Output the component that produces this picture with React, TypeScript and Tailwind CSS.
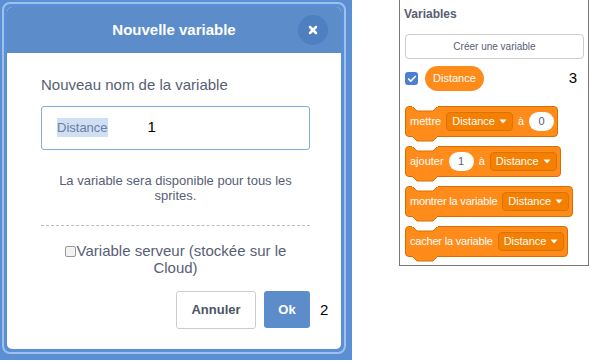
import { Check, X } from "lucide-react";

const font = { fontFamily: '"Liberation Sans", Arial, sans-serif' };

function Caret() {
  return (
    <svg width="8" height="5" viewBox="0 0 8 5" className="ml-[4px]">
      <path d="M0.5 0.5 L7.5 0.5 L4 4.5 Z" fill="white" />
    </svg>
  );
}

function Dropdown({ label }: { label: string }) {
  return (
    <span className="flex h-[19px] items-center rounded-[4px] border border-[#d97400] bg-[#f57f00] px-[5px] text-[11px] text-white">
      {label}
      <Caret />
    </span>
  );
}

function Oval({ value }: { value: string }) {
  return (
    <span className="flex h-[19px] w-[25px] items-center justify-center rounded-full bg-white text-[11px] text-[#575e75]">
      {value}
    </span>
  );
}

function Block({ children }: { children: React.ReactNode }) {
  return (
    <div className="relative flex h-[31px] w-fit items-center gap-[5px] rounded-[4px] border border-[#db6e00] bg-[#ff8c1a] pl-[4px] pr-[3px] text-[11px] text-white">
      {/* notch at top */}
      <svg
        width="26"
        height="6"
        viewBox="0 0 26 6"
        className="absolute left-[6px] top-[-1px]"
      >
        <path d="M0 0 L5 5 L21 5 L26 0 Z" fill="white" stroke="#db6e00" strokeWidth="1" />
        <path d="M0 0 L26 0" stroke="white" strokeWidth="2" />
      </svg>
      {/* tab at bottom */}
      <svg
        width="26"
        height="6"
        viewBox="0 0 26 6"
        className="absolute bottom-[-6px] left-[6px]"
      >
        <path d="M0 0 L5 5 L21 5 L26 0" fill="#ff8c1a" stroke="#db6e00" strokeWidth="1" />
        <path d="M1 0 L25 0" stroke="#ff8c1a" strokeWidth="2" />
      </svg>
      {children}
    </div>
  );
}

function Modal() {
  return (
    <div className="h-[360px] w-[352px] bg-[#5b8fd5] pb-[6px] pl-[2px] pr-[6px] pt-[2px]">
      <div className="h-full rounded-[8px] border-2 border-[#9ec0ea] p-[3px]">
        <div className="flex h-full flex-col overflow-hidden rounded-[5px] bg-white">
          <div className="relative flex h-[46px] shrink-0 items-center justify-center bg-[#5d8cca]">
            <span className="text-[15px] font-bold text-white">Nouvelle variable</span>
            <span className="absolute right-[13px] top-[8px] flex h-[30px] w-[30px] items-center justify-center rounded-full bg-[#4e7fc1]">
              <X size={12} strokeWidth={5} color="white" />
            </span>
          </div>

          <div className="flex flex-1 flex-col px-[34px] pt-[21px]">
            <div className="text-[15px] text-[#575e75]">Nouveau nom de la variable</div>
            <div className="mt-[9px] flex h-[44px] w-[269px] items-center rounded-[3px] border border-[#86a9de] pl-[15px]">
              <span className="bg-[#cfe0f5] text-[13px] text-[#6b7d9e]">Distance</span>
              <span className="ml-[40px] text-[15px] text-black">1</span>
            </div>

            <p className="mt-[23px] w-[269px] text-center text-[13px] leading-[15px] text-[#575e75]">
              La variable sera disponible pour tous les
              <br />
              sprites.
            </p>

            <div className="mt-[22px] w-[269px] border-t border-dashed border-[#bbb]" />

            <div className="mt-[16px] w-[269px] text-center text-[15px] leading-[17px] text-[#575e75]">
              <span className="mr-[1px] inline-block h-[11px] w-[11px] translate-y-[1px] rounded-[2px] border border-[#999] bg-[#f2f2f2] align-baseline" />
              Variable serveur (stockée sur le
              <br />
              Cloud)
            </div>

            <div className="mt-[15px] flex w-[269px] items-center justify-end gap-[8px]">
              <span className="flex h-[38px] w-[80px] items-center justify-center rounded-[3px] border border-[#ccc] text-[13px] font-bold text-[#4d5466]">
                Annuler
              </span>
              <span className="flex h-[37px] w-[46px] items-center justify-center rounded-[3px] bg-[#5d8cca] text-[13px] font-bold text-white">
                Ok
              </span>
            </div>
          </div>
        </div>
      </div>
    </div>
  );
}

function Palette() {
  return (
    <div className="flex h-[266px] w-[190px] flex-col border-x border-b border-[#777] bg-white pl-[4px] pt-[5px]">
      <div className="text-[12px] font-bold text-[#575e75]">Variables</div>
      <div className="ml-[1px] mt-[11px] flex h-[25px] w-[179px] items-center justify-center rounded-[4px] border border-[#ccc] text-[10px] text-[#575e75]">
        Créer une variable
      </div>
      <div className="ml-[1px] mt-[7px] flex items-center">
        <span className="flex h-[13px] w-[13px] items-center justify-center rounded-[3px] bg-[#4c7fd1]">
          <Check size={10} strokeWidth={4} color="white" />
        </span>
        <span className="ml-[7px] flex h-[25px] items-center rounded-full bg-[#ff8c1a] px-[8px] text-[11px] text-white">
          Distance
        </span>
        <span className="ml-auto mr-[11px] text-[15px] text-black">3</span>
      </div>

      <div className="ml-[1px] mt-[15px] flex flex-col gap-[9px]">
        <Block>
          <span>mettre</span>
          <Dropdown label="Distance" />
          <span>à</span>
          <Oval value="0" />
        </Block>
        <Block>
          <span>ajouter</span>
          <Oval value="1" />
          <span>à</span>
          <Dropdown label="Distance" />
        </Block>
        <Block>
          <span className="tracking-[-0.2px]">montrer la variable</span>
          <Dropdown label="Distance" />
        </Block>
        <Block>
          <span className="tracking-[-0.2px]">cacher la variable</span>
          <Dropdown label="Distance" />
        </Block>
      </div>
    </div>
  );
}

export default function App() {
  return (
    <div className="flex h-[361px] w-[590px] bg-white" style={font}>
      <Modal />
      <div className="relative">
        <span className="absolute left-[-32px] top-[299px] text-[15px] text-black">2</span>
      </div>
      <div className="ml-[47px]">
        <Palette />
      </div>
    </div>
  );
}
